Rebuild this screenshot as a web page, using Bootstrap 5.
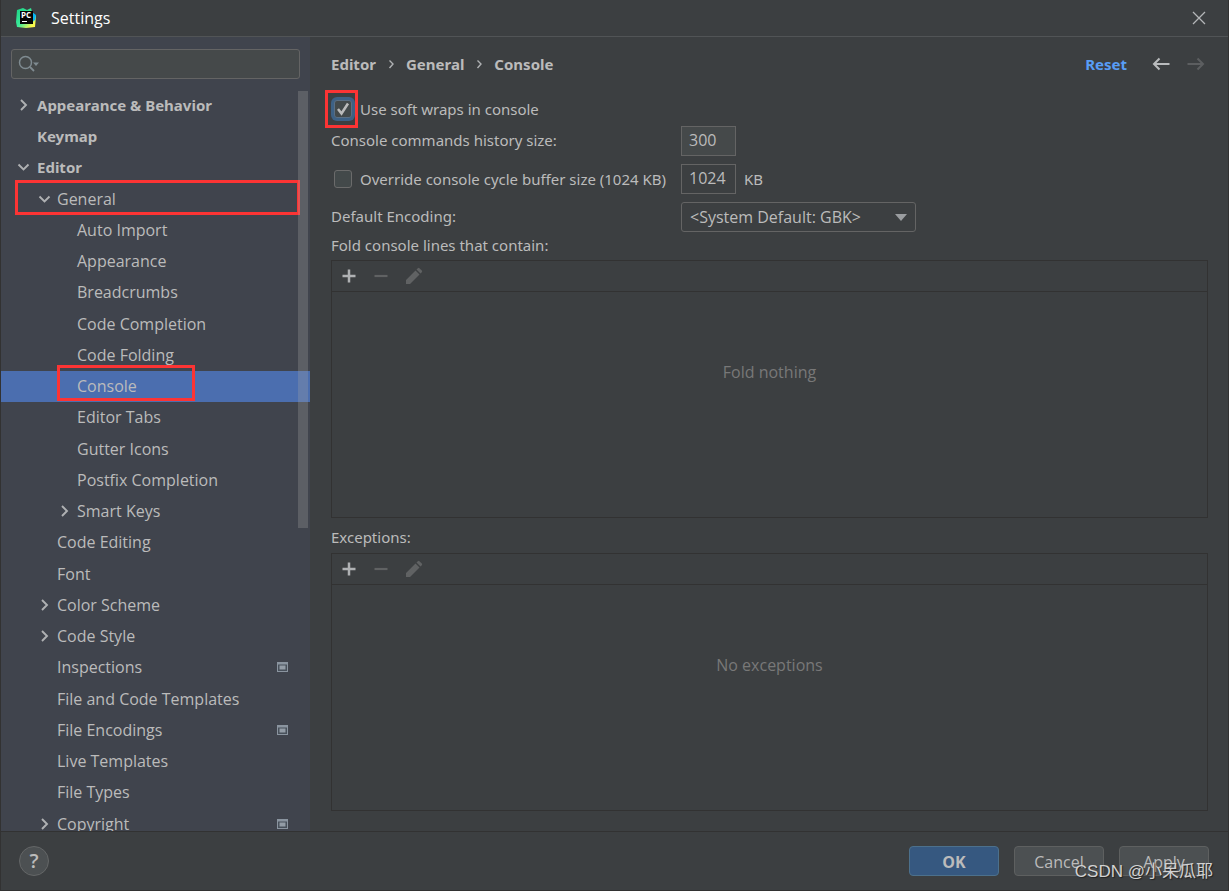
<!DOCTYPE html>
<html lang="en" data-bs-theme="dark">
<head>
<meta charset="utf-8">
<meta name="viewport" content="width=device-width, initial-scale=1">
<title>Settings</title>
<link href="https://cdn.jsdelivr.net/npm/bootstrap@5.3.0/dist/css/bootstrap.min.css" rel="stylesheet">
<style>
  :root { --fg: #bbbbbb; --pane: #3c3f41; --side: #40444d; --line: #323232; --mark-red: #fc3434; }
  body { background: var(--pane); color: var(--fg); font-family: "Open Sans", "Noto Sans CJK SC", sans-serif; font-size: 16px; line-height: 20px; }
  .window { border: solid var(--line); border-width: 0 1px 1px; }
  .titlebar { height: 37px; padding: 0 20px 0 14px; border-bottom: 1px solid #515456; }
  .app-title { font-size: 16px; font-weight: 400; margin-left: 14px; padding-top: 2px; }
  .plain { background: none; border: 0; padding: 0; color: inherit; display: flex; }
  svg { display: block; flex: none; }

  .sidebar { width: 309px; background: var(--side); padding-top: 12px; }
  .search { margin: 0 10px 11px; }
  .search svg { left: 7px; top: 5px; }
  .search .form-control { height: 30px; background: #45494a; border: 1px solid #646464; border-radius: 3px; padding-left: 32px; }
  .tree li { height: 31px; }
  .tree li:nth-child(4n+3) { height: 32px; }
  .tree a { height: 31px; color: var(--fg); text-decoration: none; padding: 0 22px 2px 0; }
  .tree a > span:first-of-type { width: 20px; }
  .tree .level-1 { padding-left: 15px; font-family: "Noto Sans", sans-serif; font-size: 15px; }
  .tree .level-1 > span:first-of-type { width: 21px; }
  .tree .level-2 { padding-left: 36px; }
  .tree .level-3 { padding-left: 56px; }
  .tree a.selected { background: #4b6eaf; }
  .scroll-thumb { top: 54px; right: 2px; width: 10px; height: 437px; background: rgba(166,166,166,.28); }
  .callout { border: 3px solid var(--mark-red); pointer-events: none; }
  .callout-general { left: 14px; right: 10px; top: -4px; height: 35px; }
  .callout-console { left: 56px; width: 138px; top: -6px; height: 36px; }
  .callout-check { left: -6px; width: 33px; top: -1px; height: 38px; }

  .content { padding: 0 20px 20px 21px; font-family: "Noto Sans", sans-serif; font-size: 15px; }
  .crumbs { height: 54px; }
  .reset { color: #589df6; text-decoration: none; }
  .check-row { height: 35px; }
  .fields { grid-template-columns: 350px auto; justify-content: start; row-gap: 8px; }
  .form-check-input.box { width: 18px; height: 18px; margin: 0 0 0 3px; float: none; flex: none; border: 1px solid #6b6b6b; border-radius: 3px; background-color: #43494a; }
  .form-check-input.box:checked { background-color: #43494a; border-color: #5a6f84; box-shadow: 0 0 0 3px #3d6185; background-size: 18px 18px;
    background-image: url("data:image/svg+xml,%3Csvg xmlns='http://www.w3.org/2000/svg' viewBox='0 0 18 18'%3E%3Cpath d='M4 9l3.500 4.500L14 3.500' fill='none' stroke='%23bbb' stroke-width='2.500'/%3E%3C/svg%3E"); }
  .form-control.num { width: 55px; height: 30px; padding: 0 7px 2px; font-family: "Open Sans", sans-serif; font-size: 16px; color: var(--fg); border: 1px solid #646464; border-radius: 0; background: #45494a; }
  .form-control.num.on { background: var(--pane); }
  .form-select.enc { width: 235px; height: 30px; padding: 0 32px 0 8px; font-family: "Open Sans", sans-serif; font-size: 16px; color: var(--fg); border: 1px solid #646464; border-radius: 3px; background-color: var(--pane); background-position: right 8px center; background-size: 12px 7px;
    background-image: url("data:image/svg+xml,%3Csvg xmlns='http://www.w3.org/2000/svg' viewBox='0 0 12 7'%3E%3Cpath d='M0 0h12L6 7z' fill='%239a9da0'/%3E%3C/svg%3E"); }
  .fields > label { padding-bottom: 3px; }
  .list-label { height: 28px; padding-bottom: 3px; }
  .list-label.second { height: 35px; padding: 3px 0 0; }
  .list-box { border: 1px solid var(--line); }
  .tools { height: 31px; padding-left: 9px; gap: 16px; border-bottom: 1px solid var(--line); }
  .empty { color: #787878; padding-bottom: 66px; font-family: "Open Sans", sans-serif; font-size: 16px; }

  .footer-bar { height: 59px; padding: 0 19px 0 18px; border-top: 1px solid var(--line); gap: 15px; }
  .help { width: 30px; height: 30px; border-radius: 50%; border: 1px solid #646667; background: #4c5052; color: var(--fg); font-size: 20px; font-weight: 600; }
  .btn.act { width: 90px; height: 30px; padding: 2px 0 0; font-size: 16px; line-height: 20px; color: var(--fg); background: #4c5052; border: 1px solid #5e6060; border-radius: 4px; }
  .btn.act.ok { background: #365880; border-color: #4c708c; font-weight: 700; }
  .watermark { right: 15px; bottom: 6px; font-family: "Liberation Sans", "Noto Sans CJK SC", sans-serif; font-size: 17px; line-height: 24px; color: #d2d2d2; text-shadow: 1px 1px 1px #222; pointer-events: none; }
</style>
</head>
<body>
<svg width="0" height="0" class="position-absolute" aria-hidden="true">
  <defs>
    <symbol id="right" viewBox="0 0 16 16"><path d="M5 3l5 5-5 5" fill="none" stroke="#afb1b3" stroke-width="1.900"/></symbol>
    <symbol id="down" viewBox="0 0 16 16"><path d="M2.500 5.500l5 5 5-5" fill="none" stroke="#afb1b3" stroke-width="1.900"/></symbol>
    <symbol id="project" viewBox="0 0 11 10"><path d="M0 0h11v10H0z" fill="#8a949f"/><path d="M1 2.500h9V9H1z" fill="#48505a"/><path d="M2.500 3.500h6v4h-6z" fill="#939ca6"/></symbol>
    <symbol id="plus" viewBox="0 0 16 16"><path d="M8 1.500v13M1.500 8h13" stroke="#afb1b3" stroke-width="2.500"/></symbol>
    <symbol id="minus" viewBox="0 0 16 16"><path d="M1.500 8h13" stroke="#606263" stroke-width="2.200"/></symbol>
    <symbol id="pencil" viewBox="0 0 18 18"><path d="M1 17v-4L10.500 3.500l4 4L5 17zM11.500 2.500l1.300-1.300q.8-.8 1.600 0l2.400 2.400q.8.8 0 1.600l-1.300 1.300z" fill="#606263"/></symbol>
  </defs>
</svg>

<div class="window vh-100 d-flex flex-column overflow-hidden position-relative">
  <header class="titlebar d-flex align-items-center flex-shrink-0">
    <svg width="22" height="22" viewBox="0 0 22 22" aria-hidden="true">
      <defs><linearGradient id="leaf" x1="0" y1="0" x2="1" y2="1"><stop offset=".1" stop-color="#21d789"/><stop offset=".5" stop-color="#3bea9a"/><stop offset=".85" stop-color="#fcf84a"/></linearGradient></defs>
      <path d="M2 3l6-2 4 2 4-2 1 4 4 4-1 11-9 1-9-1-1-5z" fill="url(#leaf)"/>
      <path d="M17 5l4 3-1 5-3 2z" fill="#07b7f4"/>
      <path d="M5 4h13v13H5z" fill="#050505"/>
      <path d="M7 14h5v1H7z" fill="#fff"/>
      <text x="6" y="11" font-family="Open Sans, sans-serif" font-size="8" font-weight="700" fill="#fff">PC</text>
    </svg>
    <h1 class="app-title mb-0">Settings</h1>
    <button class="plain ms-auto" aria-label="Close"><svg width="18" height="18" viewBox="0 0 18 18"><path d="M3 3l12 12M15 3L3 15" stroke="#b4b6b8" stroke-width="1.300"/></svg></button>
  </header>

  <div class="d-flex flex-grow-1 overflow-hidden">
    <nav class="sidebar position-relative flex-shrink-0 overflow-hidden d-flex flex-column" aria-label="Settings sections">
      <div class="search position-relative">
        <input class="form-control" type="search" aria-label="Search settings">
        <svg class="position-absolute" width="22" height="20" viewBox="0 0 22 20" aria-hidden="true"><circle cx="7.500" cy="8.500" r="6" fill="none" stroke="#7f8b91" stroke-width="1.500"/><path d="M12 13l4 4" stroke="#7f8b91" stroke-width="1.800"/><path d="M15 8.500h6l-3 3.500z" fill="#7f8b91"/></svg>
      </div>
      <ul class="tree list-unstyled mb-0 fw-normal">
        <li><a href="#" class="level-1 d-flex align-items-center fw-bold"><span><svg width="16" height="16"><use href="#right"/></svg></span>Appearance &amp; Behavior</a></li>
        <li><a href="#" class="level-1 d-flex align-items-center fw-bold"><span></span>Keymap</a></li>
        <li><a href="#" class="level-1 d-flex align-items-center fw-bold"><span><svg width="16" height="16"><use href="#down"/></svg></span>Editor</a></li>
        <li class="position-relative"><a href="#" class="level-2 d-flex align-items-center"><span><svg width="16" height="16"><use href="#down"/></svg></span>General</a><div class="callout callout-general position-absolute"></div></li>
        <li><a href="#" class="level-3 d-flex align-items-center"><span></span>Auto Import</a></li>
        <li><a href="#" class="level-3 d-flex align-items-center"><span></span>Appearance</a></li>
        <li><a href="#" class="level-3 d-flex align-items-center"><span></span>Breadcrumbs</a></li>
        <li><a href="#" class="level-3 d-flex align-items-center"><span></span>Code Completion</a></li>
        <li><a href="#" class="level-3 d-flex align-items-center"><span></span>Code Folding</a></li>
        <li class="position-relative"><a href="#" class="level-3 d-flex align-items-center selected" aria-current="page"><span></span>Console</a><div class="callout callout-console position-absolute"></div></li>
        <li><a href="#" class="level-3 d-flex align-items-center"><span></span>Editor Tabs</a></li>
        <li><a href="#" class="level-3 d-flex align-items-center"><span></span>Gutter Icons</a></li>
        <li><a href="#" class="level-3 d-flex align-items-center"><span></span>Postfix Completion</a></li>
        <li><a href="#" class="level-3 d-flex align-items-center"><span><svg width="16" height="16"><use href="#right"/></svg></span>Smart Keys</a></li>
        <li><a href="#" class="level-2 d-flex align-items-center"><span></span>Code Editing</a></li>
        <li><a href="#" class="level-2 d-flex align-items-center"><span></span>Font</a></li>
        <li><a href="#" class="level-2 d-flex align-items-center"><span><svg width="16" height="16"><use href="#right"/></svg></span>Color Scheme</a></li>
        <li><a href="#" class="level-2 d-flex align-items-center"><span><svg width="16" height="16"><use href="#right"/></svg></span>Code Style</a></li>
        <li><a href="#" class="level-2 d-flex align-items-center"><span></span>Inspections<svg class="ms-auto" width="11" height="10"><use href="#project"/></svg></a></li>
        <li><a href="#" class="level-2 d-flex align-items-center"><span></span>File and Code Templates</a></li>
        <li><a href="#" class="level-2 d-flex align-items-center"><span></span>File Encodings<svg class="ms-auto" width="11" height="10"><use href="#project"/></svg></a></li>
        <li><a href="#" class="level-2 d-flex align-items-center"><span></span>Live Templates</a></li>
        <li><a href="#" class="level-2 d-flex align-items-center"><span></span>File Types</a></li>
        <li><a href="#" class="level-2 d-flex align-items-center"><span><svg width="16" height="16"><use href="#right"/></svg></span>Copyright<svg class="ms-auto" width="11" height="10"><use href="#project"/></svg></a></li>
      </ul>
      <div class="scroll-thumb position-absolute"></div>
    </nav>

    <main class="content flex-grow-1 d-flex flex-column">
      <div class="crumbs d-flex align-items-center flex-shrink-0 fw-bold">
        <span>Editor</span>
        <svg class="mx-2" width="14" height="14" viewBox="0 0 14 14"><path d="M5.500 3.500L9 7l-3.500 4" fill="none" stroke="#afb1b3" stroke-width="1.400"/></svg>
        <span>General</span>
        <svg class="mx-2" width="14" height="14" viewBox="0 0 14 14"><path d="M5.500 3.500L9 7l-3.500 4" fill="none" stroke="#afb1b3" stroke-width="1.400"/></svg>
        <span>Console</span>
        <a href="#" class="reset ms-auto me-4">Reset</a>
        <button class="plain me-3" aria-label="Back"><svg width="20" height="16" viewBox="0 0 20 16"><path d="M18.500 8H3M8.500 2.500L3 8l5.500 5.500" fill="none" stroke="#b9bbbd" stroke-width="2"/></svg></button>
        <button class="plain" aria-label="Forward" disabled><svg width="21" height="16" viewBox="0 0 21 16"><path d="M.500 8H16M10.500 2.500L16 8l-5.500 5.500" fill="none" stroke="#5c5e60" stroke-width="2"/></svg></button>
      </div>

      <div class="check-row position-relative d-flex align-items-center flex-shrink-0">
        <input class="form-check-input box" type="checkbox" id="wrap" checked>
        <label for="wrap" class="ms-2">Use soft wraps in console</label>
        <div class="callout callout-check position-absolute"></div>
      </div>
      <div class="fields d-grid align-items-center flex-shrink-0">
        <label for="history">Console commands history size:</label>
        <input class="form-control num" id="history" type="text" value="300">
        <div class="d-flex align-items-center">
          <input class="form-check-input box" type="checkbox" id="override">
          <label for="override" class="ms-2 text-nowrap">Override console cycle buffer size (1024 KB)</label>
        </div>
        <div class="d-flex align-items-center">
          <input class="form-control num on" id="buffer" type="text" value="1024" aria-label="Buffer size">
          <label for="buffer" class="ms-2">KB</label>
        </div>
        <label for="encoding">Default Encoding:</label>
        <select class="form-select enc" id="encoding"><option>&lt;System Default: GBK&gt;</option></select>
      </div>

      <div class="list-label d-flex align-items-center flex-shrink-0">Fold console lines that contain:</div>
      <section class="list-box flex-fill d-flex flex-column">
        <div class="tools d-flex align-items-center">
          <button class="plain" aria-label="Add"><svg width="16" height="16"><use href="#plus"/></svg></button>
          <button class="plain" aria-label="Remove" disabled><svg width="16" height="16"><use href="#minus"/></svg></button>
          <button class="plain" aria-label="Edit" disabled><svg width="18" height="18"><use href="#pencil"/></svg></button>
        </div>
        <div class="empty flex-grow-1 d-flex align-items-center justify-content-center">Fold nothing</div>
      </section>
      <div class="list-label second d-flex align-items-center flex-shrink-0">Exceptions:</div>
      <section class="list-box flex-fill d-flex flex-column">
        <div class="tools d-flex align-items-center">
          <button class="plain" aria-label="Add"><svg width="16" height="16"><use href="#plus"/></svg></button>
          <button class="plain" aria-label="Remove" disabled><svg width="16" height="16"><use href="#minus"/></svg></button>
          <button class="plain" aria-label="Edit" disabled><svg width="18" height="18"><use href="#pencil"/></svg></button>
        </div>
        <div class="empty flex-grow-1 d-flex align-items-center justify-content-center">No exceptions</div>
      </section>
    </main>
  </div>

  <footer class="footer-bar d-flex align-items-center flex-shrink-0">
    <button class="help p-0 me-auto d-flex align-items-center justify-content-center" aria-label="Help">?</button>
    <button class="btn act ok">OK</button>
    <button class="btn act">Cancel</button>
    <button class="btn act">Apply</button>
  </footer>
  <div class="watermark position-absolute">CSDN @小呆瓜耶</div>
</div>
<script src="https://cdn.jsdelivr.net/npm/bootstrap@5.3.0/dist/js/bootstrap.bundle.min.js"></script>
</body>
</html>
